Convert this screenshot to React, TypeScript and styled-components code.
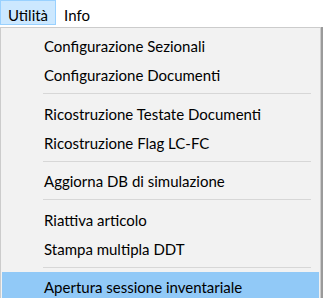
import React from "react"
import styled, { createGlobalStyle } from "styled-components"

const GlobalStyle = createGlobalStyle`
  html, body {
    margin: 0;
    padding: 0;
    background: #ffffff;
    overflow: hidden;
  }
  body {
    font-family: Lato, "Liberation Sans", sans-serif;
    font-size: 15px;
    color: #000000;
  }
`

const Screen = styled.div`
  width: 323px;
  height: 298px;
  overflow: hidden;
  background: #ffffff;
`

const MenuBar = styled.div`
  display: flex;
  height: 27px;
  background: #ffffff;
`

const MenuTitle = styled.div<{ $open?: boolean }>`
  box-sizing: border-box;
  height: 25px;
  padding: 5px 7px 0;
  line-height: 18px;
  border: 1px solid ${(p) => (p.$open ? "#99d1ff" : "transparent")};
  background: ${(p) => (p.$open ? "#cce8ff" : "transparent")};
  white-space: nowrap;
`

const Dropdown = styled.div`
  box-sizing: border-box;
  width: 321px;
  padding: 3px 1px 4px;
  background: #f2f2f2;
  border: 1px solid #cccccc;
  box-shadow: 2px 0 0 #9a9a9a;
`

const Item = styled.div<{ $hover?: boolean }>`
  box-sizing: border-box;
  height: 29px;
  padding: 2px 0 0 42px;
  line-height: 26px;
  white-space: nowrap;
  background: ${(p) => (p.$hover ? "#91c9f7" : "transparent")};
`

const Separator = styled.div`
  height: 9.5px;
  display: flex;
  align-items: center;
  padding: 0 8px 0 41px;

  &::after {
    content: "";
    flex: 1;
    height: 1px;
    background: #d7d7d7;
  }
`

type Entry = { label: string; hover?: boolean } | "sep"

const entries: Entry[] = [
  { label: "Configurazione Sezionali" },
  { label: "Configurazione Documenti" },
  "sep",
  { label: "Ricostruzione Testate Documenti" },
  { label: "Ricostruzione Flag LC-FC" },
  "sep",
  { label: "Aggiorna DB di simulazione" },
  "sep",
  { label: "Riattiva articolo" },
  { label: "Stampa multipla DDT" },
  "sep",
  { label: "Apertura sessione inventariale", hover: true },
]

export default function App() {
  return (
    <Screen>
      <GlobalStyle />
      <MenuBar>
        <MenuTitle $open>Utilità</MenuTitle>
        <MenuTitle>Info</MenuTitle>
      </MenuBar>
      <Dropdown>
        {entries.map((e, i) =>
          e === "sep" ? (
            <Separator key={i} />
          ) : (
            <Item key={i} $hover={e.hover}>
              {e.label}
            </Item>
          )
        )}
      </Dropdown>
    </Screen>
  )
}
